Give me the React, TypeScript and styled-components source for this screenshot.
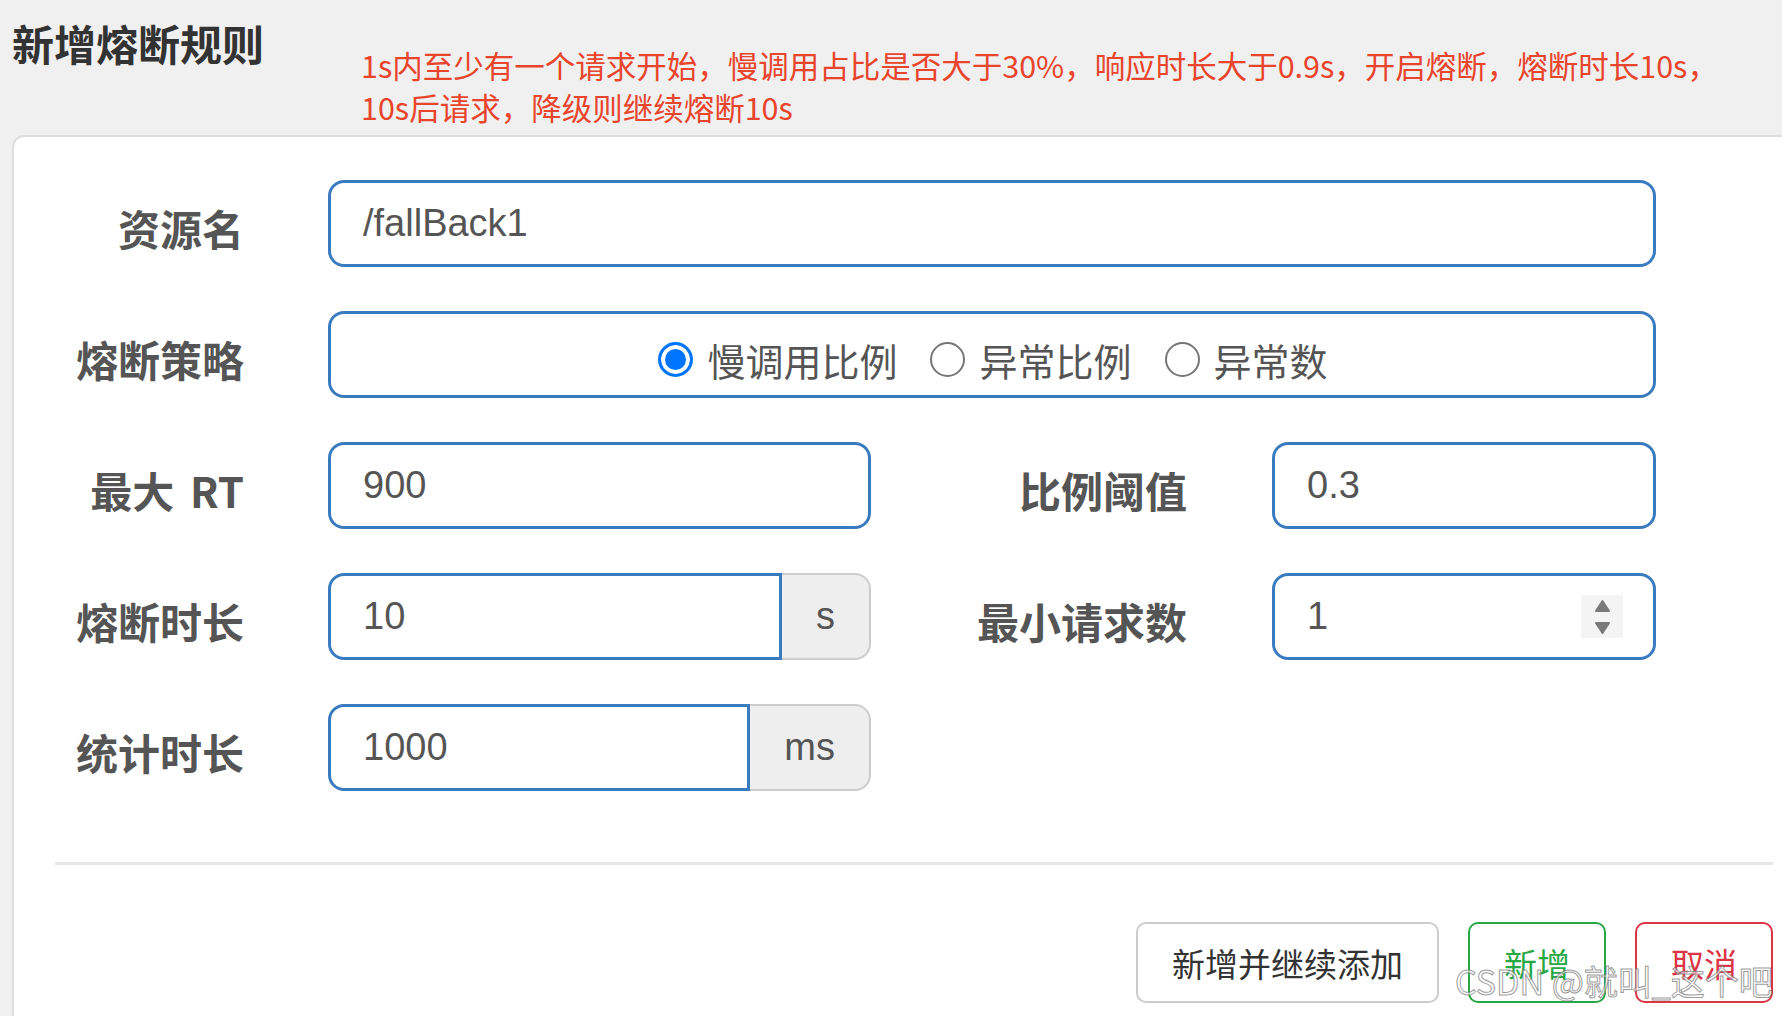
import React from 'react'
import styled, { createGlobalStyle } from 'styled-components'

const cjk = `"Noto Sans CJK SC", "Noto Sans", sans-serif`
const latin = `"Liberation Sans", Arial, "Noto Sans CJK SC", sans-serif`

const GlobalStyle = createGlobalStyle`
  html, body {
    margin: 0;
    padding: 0;
    overflow: hidden;
    background: #f0f0f0;
  }
  *, *::before, *::after {
    box-sizing: border-box;
  }
`

const Page = styled.div`
  position: relative;
  width: 1782px;
  height: 1016px;
  overflow: hidden;
`

const Header = styled.div`
  display: flex;
  align-items: flex-start;
  height: 135px;
  padding: 22px 0 0 12px;
`

const Title = styled.h4`
  flex-shrink: 0;
  width: 349px;
  margin: 0;
  font-family: ${cjk};
  font-size: 42px;
  font-weight: 700;
  line-height: 42px;
  color: #333;
`

const Note = styled.p`
  margin: 22px 0 0;
  font-family: ${cjk};
  font-size: 30.5px;
  line-height: 42px;
  color: #e9442c;
`

const Card = styled.div`
  margin: 0 -19px 0 12px;
  padding: 43px 26px 80px;
  background: #fff;
  border: 2px solid #ddd;
  border-radius: 12px 12px 0 0;
`

const Form = styled.div`
  display: grid;
  grid-template-columns: 288px 543px 401px 384px;
  grid-auto-rows: 87px;
  row-gap: 44px;
`

const Label = styled.label<{ $gap?: number }>`
  display: flex;
  align-items: center;
  justify-content: flex-end;
  padding: 8px ${p => p.$gap ?? 84}px 0 0;
  font-family: ${cjk};
  font-size: 42px;
  font-weight: 700;
  word-spacing: 6px;
  color: #555;
  white-space: pre;
`

const Field = styled.div<{ $span?: boolean; $joined?: boolean; $center?: boolean }>`
  grid-column: ${p => (p.$span ? 'span 3' : 'auto')};
  flex: 1;
  min-width: 0;
  display: flex;
  align-items: center;
  justify-content: ${p => (p.$center ? 'center' : 'flex-start')};
  height: 87px;
  padding: 0 30px 0 32px;
  background: #fff;
  border: 3px solid #3a7bbf;
  border-radius: ${p => (p.$joined ? '16px 0 0 16px' : '16px')};
`

const Entry = styled.input`
  flex: 1;
  width: 100%;
  min-width: 0;
  padding: 0;
  border: none;
  outline: none;
  background: transparent;
  font-family: ${latin};
  font-size: 38px;
  color: #555;
`

const Group = styled.div`
  display: flex;
  min-width: 0;
  height: 87px;
`

const Addon = styled.span`
  flex-shrink: 0;
  display: flex;
  align-items: center;
  padding: 0 34px;
  background: #eee;
  border: 2px solid #ccc;
  border-left: none;
  border-radius: 0 16px 16px 0;
  font-family: ${latin};
  font-size: 38px;
  color: #555;
`

const Spinner = styled.span`
  flex-shrink: 0;
  display: flex;
  flex-direction: column;
  align-items: center;
  justify-content: center;
  gap: 8px;
  width: 42px;
  height: 43px;
  background: #f4f4f4;
`

const RadioGroup = styled.div`
  display: flex;
  align-items: center;
  gap: 33px;
  margin-top: 10px;
`

const RadioOption = styled.label`
  display: flex;
  align-items: center;
  gap: 14px;
  font-family: ${cjk};
  font-size: 38px;
  color: #555;
`

const RadioDot = styled.input.attrs({ type: 'radio' })`
  appearance: none;
  flex-shrink: 0;
  width: 35px;
  height: 35px;
  margin: 0;
  border: 2px solid #767676;
  border-radius: 50%;
  background: #fff;

  &:checked {
    border: 3px solid #0075ff;
    background: #0075ff;
    box-shadow: inset 0 0 0 4px #fff;
  }
`

const Divider = styled.hr`
  height: 3px;
  margin: 71px 0 0 15px;
  border: none;
  background: #e6e6e6;
`

const Actions = styled.div`
  display: flex;
  justify-content: flex-end;
  gap: 29px;
  margin-top: 57px;
`

const tones = {
  plain: { border: '#ccc', text: '#333' },
  success: { border: '#28a745', text: '#28a745' },
  danger: { border: '#dc3545', text: '#dc3545' },
}

const Button = styled.button<{ $tone: keyof typeof tones }>`
  height: 81px;
  padding: 0 34px;
  background: #fff;
  border: 2px solid ${p => tones[p.$tone].border};
  border-radius: 10px;
  font-family: ${cjk};
  font-size: 33px;
  color: ${p => tones[p.$tone].text};
  cursor: pointer;
`

const Watermark = styled.span`
  position: absolute;
  left: 1455px;
  top: 961px;
  font-family: ${cjk};
  font-size: 34px;
  line-height: 1.2;
  color: rgba(255, 255, 255, 0.6);
  -webkit-text-stroke: 1px rgba(120, 120, 120, 0.75);
  white-space: nowrap;
  pointer-events: none;
`

const Arrow: React.FC<{ down?: boolean }> = ({ down }) => (
  <svg width="17" height="14" viewBox="0 0 17 14">
    <path
      d={down ? 'M2 2 H15 L8.5 12 Z' : 'M8.5 2 L15 12 H2 Z'}
      fill="#7a7a7a"
      stroke="#7a7a7a"
      strokeWidth="2"
      strokeLinejoin="round"
    />
  </svg>
)

const strategies = ['慢调用比例', '异常比例', '异常数']

const App: React.FC = () => {
  return (
    <Page>
      <GlobalStyle />
      <Header>
        <Title>新增熔断规则</Title>
        <Note>
          1s内至少有一个请求开始，慢调用占比是否大于30%，响应时长大于0.9s，开启熔断，熔断时长10s，
          <br />
          10s后请求，降级则继续熔断10s
        </Note>
      </Header>

      <Card>
        <Form>
          <Label>资源名</Label>
          <Field $span>
            <Entry defaultValue="/fallBack1" />
          </Field>

          <Label>熔断策略</Label>
          <Field $span $center>
            <RadioGroup>
              {strategies.map((name, i) => (
                <RadioOption key={name}>
                  <RadioDot name="grade" defaultChecked={i === 0} />
                  {name}
                </RadioOption>
              ))}
            </RadioGroup>
          </Field>

          <Label>最大 RT</Label>
          <Field>
            <Entry defaultValue="900" />
          </Field>
          <Label $gap={85}>比例阈值</Label>
          <Field>
            <Entry defaultValue="0.3" />
          </Field>

          <Label>熔断时长</Label>
          <Group>
            <Field $joined>
              <Entry defaultValue="10" />
            </Field>
            <Addon>s</Addon>
          </Group>
          <Label $gap={85}>最小请求数</Label>
          <Field>
            <Entry defaultValue="1" />
            <Spinner>
              <Arrow />
              <Arrow down />
            </Spinner>
          </Field>

          <Label>统计时长</Label>
          <Group>
            <Field $joined>
              <Entry defaultValue="1000" />
            </Field>
            <Addon>ms</Addon>
          </Group>
        </Form>

        <Divider />

        <Actions>
          <Button $tone="plain">新增并继续添加</Button>
          <Button $tone="success">新增</Button>
          <Button $tone="danger">取消</Button>
        </Actions>
      </Card>

      <Watermark>CSDN @就叫_这个吧</Watermark>
    </Page>
  )
}

export default App
